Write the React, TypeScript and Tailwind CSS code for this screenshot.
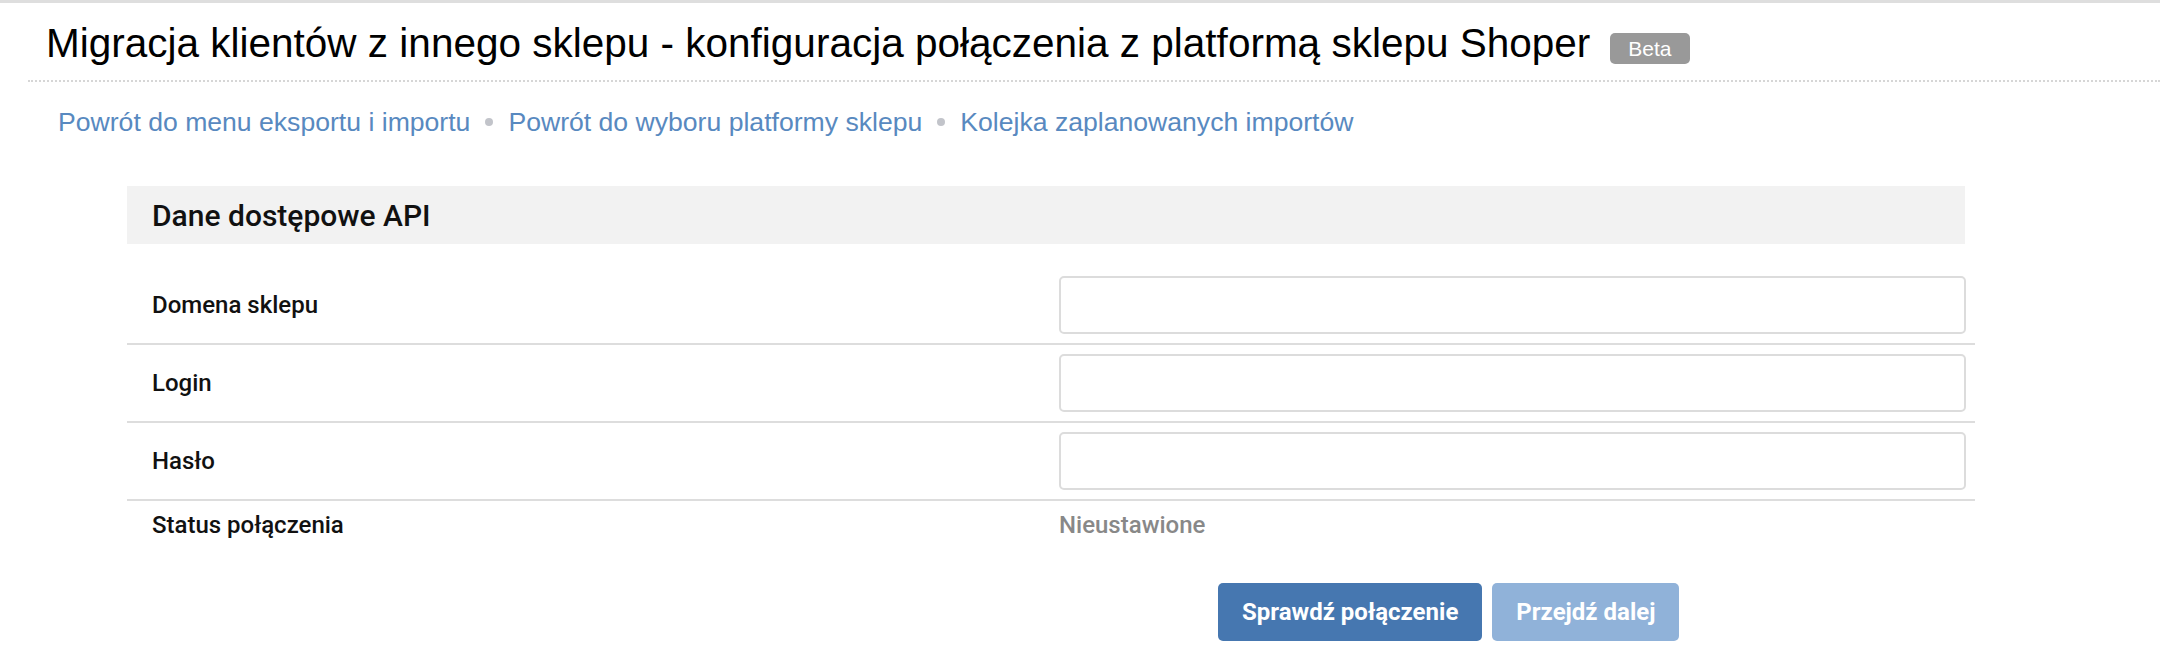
const helvetica = "font-['Liberation_Sans',Arial,Helvetica,sans-serif]"
const roboto = "font-['Roboto','Liberation_Sans',Arial,sans-serif]"

const links = [
  'Powrót do menu eksportu i importu',
  'Powrót do wyboru platformy sklepu',
  'Kolejka zaplanowanych importów',
]

const fields = ['Domena sklepu', 'Login', 'Hasło']

function FieldRow({ label }: { label: string }) {
  return (
    <div className="flex border-b-2 border-[#dddddd] py-[9px]">
      <div className="flex w-1/2 items-center pl-[25px] text-[24px] font-medium text-[#111]">{label}</div>
      <div className="w-1/2 pl-[8px] pr-[9px]">
        <input
          type={label === 'Hasło' ? 'password' : 'text'}
          className="block h-[58px] w-full rounded-[5px] border-2 border-[#dcdcdc] bg-white px-3 outline-none"
        />
      </div>
    </div>
  )
}

export default function App() {
  return (
    <div className={`h-[660px] w-[2160px] overflow-hidden bg-white ${helvetica}`}>
      <div className="h-[3px] bg-[#dedede]" />

      <div className="ml-[28px] flex items-start border-b-2 border-dotted border-[#d6d6d6] pb-[13px] pl-[18px] pt-[16px]">
        <h1 className="text-[40.5px] leading-[48px] text-black">
          Migracja klientów z innego sklepu - konfiguracja połączenia z platformą sklepu Shoper
        </h1>
        <span className="ml-[20px] mt-[14px] flex h-[31px] items-center rounded-[5px] bg-[#999999] px-[18px] text-[21px] text-white">
          Beta
        </span>
      </div>

      <nav className="mt-[24px] flex items-center pl-[58px] text-[26.6px] leading-[32px]">
        {links.map((link, i) => (
          <div key={link} className="flex items-center">
            {i > 0 && <span className="mx-[15px] h-[8px] w-[8px] rounded-full bg-[#c2c4ca]" />}
            <a href="#" className="text-[#5889c0]">
              {link}
            </a>
          </div>
        ))}
      </nav>

      <section className={`ml-[127px] mt-[48px] w-[1848px] ${roboto}`}>
        <div className="flex h-[58px] w-[1838px] items-center bg-[#f2f2f2] pl-[25px] text-[30px] font-medium text-[#111]">
          Dane dostępowe API
        </div>

        <div className="mt-[23px]">
          {fields.map((f) => (
            <FieldRow key={f} label={f} />
          ))}
          <div className="flex h-[48px] items-center">
            <div className="w-1/2 pl-[25px] text-[24px] font-medium text-[#111]">Status połączenia</div>
            <div className="w-1/2 pl-[8px] text-[24px] font-medium text-[#888]">Nieustawione</div>
          </div>
        </div>

        <div className="ml-[1091px] mt-[34px] flex gap-[10px]">
          <button className="h-[58px] rounded-[5px] bg-[#4677b0] px-[24px] text-[24px] font-bold text-white">
            Sprawdź połączenie
          </button>
          <button disabled className="h-[58px] rounded-[5px] bg-[#90b2d9] px-[24px] text-[24px] font-bold text-white">
            Przejdź dalej
          </button>
        </div>
      </section>
    </div>
  )
}
